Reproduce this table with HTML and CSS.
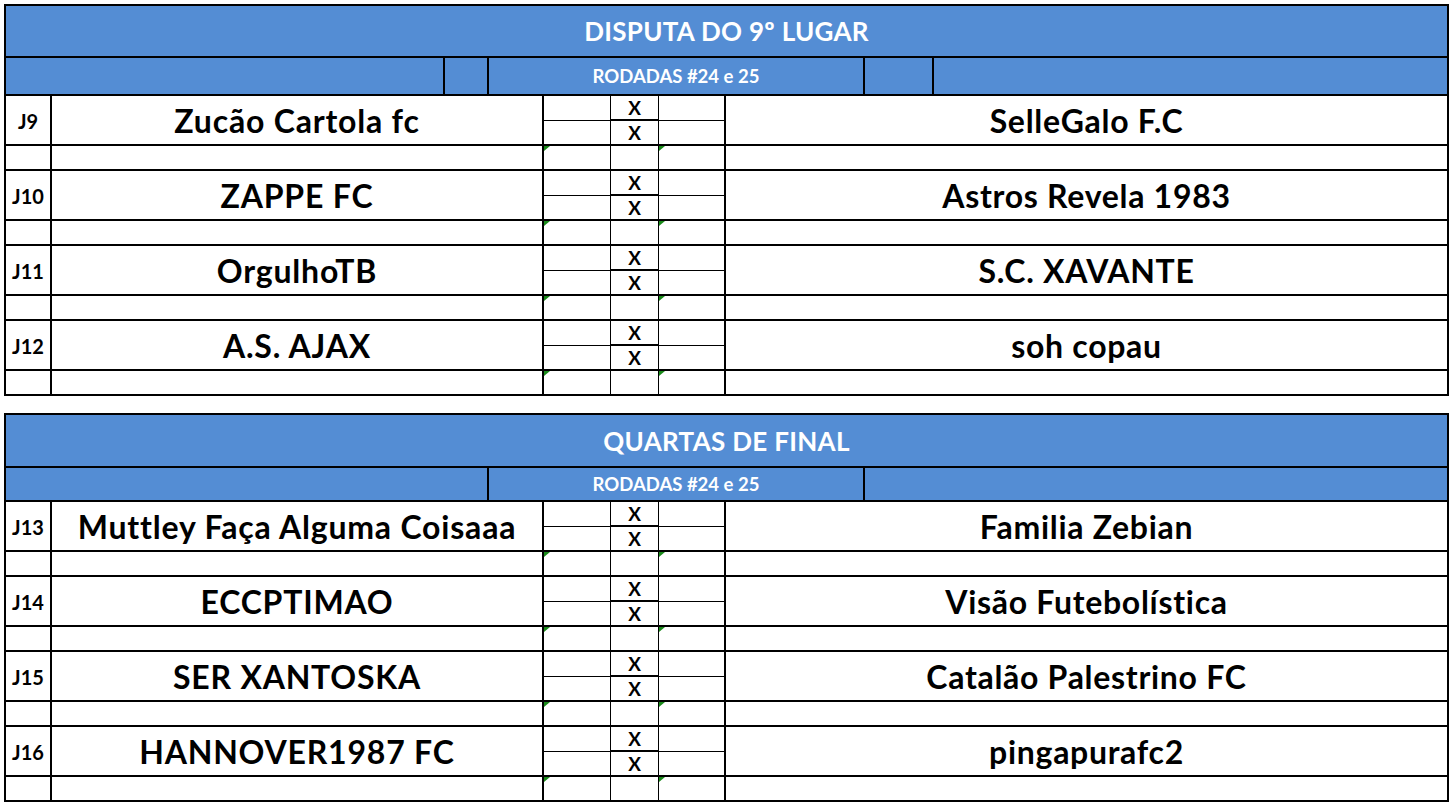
FILE: index.html
```html
<!DOCTYPE html>
<html lang="pt">
<head>
<meta charset="utf-8">
<title>Chaveamento</title>
<link rel="stylesheet" href="styles.css">
</head>
<body>
<div class="sheet">
  <section class="bracket first">
    <div class="title">DISPUTA DO 9º LUGAR</div>
    <div class="sub">
      <div class="sc w439"></div>
      <div class="sc w44"></div>
      <div class="sc w376">RODADAS #24 e 25</div>
      <div class="sc w69"></div>
      <div class="sc last"></div>
    </div>
    <div class="match">
      <div class="jid">J9</div><div class="home">Zucão Cartola fc</div>
      <div class="s1 top"></div><div class="xc top">X</div><div class="s2 top"></div>
      <div class="away">SelleGalo F.C</div>
      <div class="s1 bot"></div><div class="xc bot">X</div><div class="s2 bot"></div>
      <div class="e ej"></div><div class="e en"></div><div class="e es1 tri"></div><div class="e ex"></div><div class="e es2 tri"></div><div class="e ea"></div>
    </div>
    <div class="match">
      <div class="jid">J10</div><div class="home">ZAPPE FC</div>
      <div class="s1 top"></div><div class="xc top">X</div><div class="s2 top"></div>
      <div class="away">Astros Revela 1983</div>
      <div class="s1 bot"></div><div class="xc bot">X</div><div class="s2 bot"></div>
      <div class="e ej"></div><div class="e en"></div><div class="e es1 tri"></div><div class="e ex"></div><div class="e es2 tri"></div><div class="e ea"></div>
    </div>
    <div class="match">
      <div class="jid">J11</div><div class="home">OrgulhoTB</div>
      <div class="s1 top"></div><div class="xc top">X</div><div class="s2 top"></div>
      <div class="away">S.C. XAVANTE</div>
      <div class="s1 bot"></div><div class="xc bot">X</div><div class="s2 bot"></div>
      <div class="e ej"></div><div class="e en"></div><div class="e es1 tri"></div><div class="e ex"></div><div class="e es2 tri"></div><div class="e ea"></div>
    </div>
    <div class="match">
      <div class="jid">J12</div><div class="home">A.S. AJAX</div>
      <div class="s1 top"></div><div class="xc top">X</div><div class="s2 top"></div>
      <div class="away">soh copau</div>
      <div class="s1 bot"></div><div class="xc bot">X</div><div class="s2 bot"></div>
      <div class="e ej"></div><div class="e en"></div><div class="e es1 tri"></div><div class="e ex"></div><div class="e es2 tri"></div><div class="e ea"></div>
    </div>
  </section>

  <section class="bracket second">
    <div class="title t2">QUARTAS DE FINAL</div>
    <div class="sub s2h">
      <div class="sc w483"></div>
      <div class="sc w376">RODADAS #24 e 25</div>
      <div class="sc last"></div>
    </div>
    <div class="match">
      <div class="jid">J13</div><div class="home">Muttley Faça Alguma Coisaaa</div>
      <div class="s1 top"></div><div class="xc top">X</div><div class="s2 top"></div>
      <div class="away">Familia Zebian</div>
      <div class="s1 bot"></div><div class="xc bot">X</div><div class="s2 bot"></div>
      <div class="e ej"></div><div class="e en"></div><div class="e es1 tri"></div><div class="e ex"></div><div class="e es2 tri"></div><div class="e ea"></div>
    </div>
    <div class="match">
      <div class="jid">J14</div><div class="home">ECCPTIMAO</div>
      <div class="s1 top"></div><div class="xc top">X</div><div class="s2 top"></div>
      <div class="away">Visão Futebolística</div>
      <div class="s1 bot"></div><div class="xc bot">X</div><div class="s2 bot"></div>
      <div class="e ej"></div><div class="e en"></div><div class="e es1 tri"></div><div class="e ex"></div><div class="e es2 tri"></div><div class="e ea"></div>
    </div>
    <div class="match">
      <div class="jid">J15</div><div class="home">SER XANTOSKA</div>
      <div class="s1 top"></div><div class="xc top">X</div><div class="s2 top"></div>
      <div class="away">Catalão Palestrino FC</div>
      <div class="s1 bot"></div><div class="xc bot">X</div><div class="s2 bot"></div>
      <div class="e ej"></div><div class="e en"></div><div class="e es1 tri"></div><div class="e ex"></div><div class="e es2 tri"></div><div class="e ea"></div>
    </div>
    <div class="match">
      <div class="jid">J16</div><div class="home">HANNOVER1987 FC</div>
      <div class="s1 top"></div><div class="xc top">X</div><div class="s2 top"></div>
      <div class="away">pingapurafc2</div>
      <div class="s1 bot"></div><div class="xc bot">X</div><div class="s2 bot"></div>
      <div class="e ej"></div><div class="e en"></div><div class="e es1 tri"></div><div class="e ex"></div><div class="e es2 tri"></div><div class="e ea"></div>
    </div>
  </section>
</div>
</body>
</html>
```

FILE: styles.css
```css
* { box-sizing: border-box; }
html, body { margin: 0; padding: 0; background: #fff; }
body { font-family: "Lato", "Open Sans", sans-serif; color: #000; }

.sheet { padding: 4px 0 0 4px; width: 1449px; }

.bracket {
  border: 2px solid #000;
  width: 1445px;
}
.bracket.second { margin-top: 17px; }

.title {
  height: 52px;
  background: #548dd4;
  color: #fff;
  font-weight: 700;
  font-size: 26px;
  letter-spacing: 0.3px;
  display: flex;
  align-items: center;
  justify-content: center;
  border-bottom: 2px solid #000;
}
.title.t2 { height: 53px; }

.sub {
  display: flex;
  height: 38px;
  background: #548dd4;
  border-bottom: 2px solid #000;
}
.sub.s2h { height: 34px; }
.sc {
  height: 100%;
  border-right: 2px solid #000;
  color: #fff;
  font-weight: 700;
  font-size: 18.5px;
  display: flex;
  align-items: center;
  justify-content: center;
}
.sc.w439 { width: 439px; }
.sc.w44 { width: 44px; }
.sc.w376 { width: 376px; }
.sc.w69 { width: 69px; }
.sc.w483 { width: 483px; }
.sc.last { flex: 1; border-right: 0; }

.match {
  display: grid;
  grid-template-columns: 46px 492px 67px 48px 67px 1fr;
  grid-template-rows: 25px 25px 25px;
}
.match:last-child { grid-template-rows: 25px 25px 23px; }
.match > div {
  display: flex;
  align-items: center;
  justify-content: center;
  font-weight: 700;
}

.jid {
  grid-column: 1; grid-row: 1 / 3;
  border-right: 2px solid #000;
  border-bottom: 2px solid #000;
  font-size: 20px;
  padding-top: 2px;
}
.home {
  grid-column: 2; grid-row: 1 / 3;
  border-right: 2px solid #000;
  border-bottom: 2px solid #000;
  font-size: 32px;
  letter-spacing: 0.8px;
  white-space: nowrap;
}
.away {
  grid-column: 6; grid-row: 1 / 3;
  border-bottom: 2px solid #000;
  font-size: 32px;
  letter-spacing: 0.7px;
  white-space: nowrap;
}
.s1 { grid-column: 3; border-right: 1px solid #000; }
.xc { grid-column: 4; border-right: 1px solid #000; font-size: 19px; }
.s2 { grid-column: 5; border-right: 2px solid #000; }
.top { grid-row: 1; border-bottom: 1px solid #000; }
.bot { grid-row: 2; border-bottom: 2px solid #000; }
.xc.top { border-bottom-width: 2px; }

.e { grid-row: 3; border-bottom: 2px solid #000; }
.match:last-child .e { border-bottom: 0; }
.ej { grid-column: 1; border-right: 2px solid #000; }
.en { grid-column: 2; border-right: 2px solid #000; }
.es1 { grid-column: 3; border-right: 1px solid #000; }
.ex { grid-column: 4; border-right: 1px solid #000; }
.es2 { grid-column: 5; border-right: 2px solid #000; }
.ea { grid-column: 6; }

.tri { position: relative; }
.tri::before {
  content: "";
  position: absolute;
  left: 0;
  top: 0;
  border-top: 5px solid #1a8a1a;
  border-right: 6px solid transparent;
}
```
